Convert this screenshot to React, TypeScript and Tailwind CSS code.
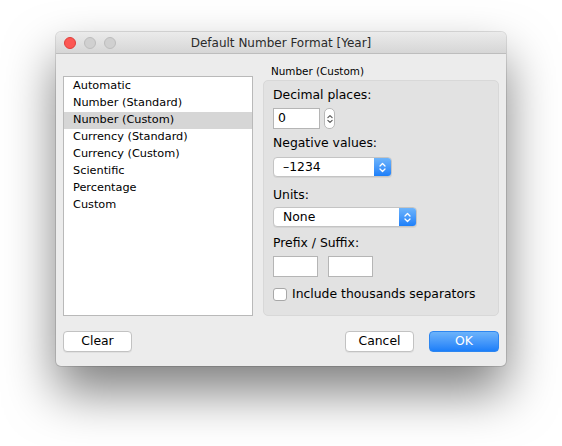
import React from "react";

const font = { fontFamily: '"DejaVu Sans", "Liberation Sans", sans-serif' };

function UpDown({ color = "#fff", w = 7, h = 11 }: { color?: string; w?: number; h?: number }) {
  return (
    <svg width={w} height={h} viewBox="0 0 7 11" fill="none">
      <path d="M1 4 L3.5 1.5 L6 4" stroke={color} strokeWidth="1.3" strokeLinecap="round" strokeLinejoin="round" />
      <path d="M1 7 L3.5 9.5 L6 7" stroke={color} strokeWidth="1.3" strokeLinecap="round" strokeLinejoin="round" />
    </svg>
  );
}

function Select({ value, width }: { value: string; width: string }) {
  return (
    <div
      className={`${width} h-[20px] flex rounded-[4px] bg-white border border-[#c4c4c4] shadow-[0_1px_0_rgba(0,0,0,0.06)] overflow-hidden`}
    >
      <div className="flex-1 flex items-center pl-[9px] text-[12.4px] text-[#000]">{value}</div>
      <div className="w-[17px] h-full flex items-center justify-center bg-gradient-to-b from-[#6db4fb] to-[#1b7ff9]">
        <UpDown />
      </div>
    </div>
  );
}

const items = [
  "Automatic",
  "Number (Standard)",
  "Number (Custom)",
  "Currency (Standard)",
  "Currency (Custom)",
  "Scientific",
  "Percentage",
  "Custom",
];

export default function App() {
  return (
    <div className="w-[562px] h-[446px] bg-white pt-[32px] pl-[56px]" style={font}>
      <div className="w-[450px] h-[334px] rounded-[5px] bg-[#ececec] flex flex-col shadow-[0_26px_50px_0px_rgba(0,0,0,0.5),0_0_0_1px_rgba(0,0,0,0.12)]">
        {/* title bar */}
        <div className="h-[22px] shrink-0 rounded-t-[5px] bg-gradient-to-b from-[#ebebeb] to-[#d6d6d6] border-b border-[#bdbdbd] flex items-center relative">
          <div className="absolute left-[8px] top-[5px] flex gap-[8px]">
            <div className="w-[12px] h-[12px] rounded-full bg-[#fc5753] border border-[#df3e3a]" />
            <div className="w-[12px] h-[12px] rounded-full bg-[#d0d0d0] border border-[#bdbdbd]" />
            <div className="w-[12px] h-[12px] rounded-full bg-[#d0d0d0] border border-[#bdbdbd]" />
          </div>
          <div className="flex-1 text-center text-[12px] text-[#2a2a2a] leading-none">Default Number Format [Year]</div>
        </div>

        {/* body */}
        <div className="flex-1 flex flex-col px-[7px]">
          <div className="flex gap-[10px] pt-[10px]">
            {/* list */}
            <div className="mt-[12px] w-[190px] h-[240px] bg-white border border-[#b9b9b9] pt-[1px]">
              {items.map((it) => (
                <div
                  key={it}
                  className={`h-[17px] flex items-center pl-[9px] text-[11.3px] text-[#000] ${
                    it === "Number (Custom)" ? "bg-[#d6d6d6]" : ""
                  }`}
                >
                  {it}
                </div>
              ))}
            </div>

            {/* right */}
            <div className="w-[236px] flex flex-col">
              <div className="h-[16px] flex items-center pl-[8px] text-[10.4px] text-[#000]">Number (Custom)</div>
              <div className="h-[236px] rounded-[5px] bg-[#e2e2e2] border border-[#d8d8d8] pl-[9px] pt-[6px] flex flex-col text-[12.4px] text-[#000]">
                <div className="h-[16px] flex items-center">Decimal places:</div>
                <div className="mt-[5px] flex items-center gap-[4px]">
                  <div className="w-[47px] h-[21px] bg-white border border-[#b5b5b5] flex items-center pl-[4px]">0</div>
                  <div className="w-[11px] h-[21px] rounded-[5px] bg-white border border-[#b9b9b9] flex items-center justify-center">
                    <UpDown color="#555" w={6} h={10} />
                  </div>
                </div>
                <div className="mt-[6px] h-[16px] flex items-center">Negative values:</div>
                <div className="mt-[6px]">
                  <Select value="–1234" width="w-[119px]" />
                </div>
                <div className="mt-[10px] h-[16px] flex items-center">Units:</div>
                <div className="mt-[4px]">
                  <Select value="None" width="w-[144px]" />
                </div>
                <div className="mt-[8px] h-[16px] flex items-center">Prefix / Suffix:</div>
                <div className="mt-[5px] flex gap-[10px]">
                  <div className="w-[45px] h-[21px] bg-white border border-[#b5b5b5]" />
                  <div className="w-[45px] h-[21px] bg-white border border-[#b5b5b5]" />
                </div>
                <div className="mt-[9px] h-[16px] flex items-center gap-[5px]">
                  <div className="w-[14px] h-[13px] bg-white border border-[#a8a8a8] rounded-[3px]" />
                  <span>Include thousands separators</span>
                </div>
              </div>
            </div>
          </div>

          {/* buttons */}
          <div className="mt-[15px] flex items-center">
            <button className="w-[69px] h-[21px] rounded-[4px] bg-white border border-[#c2c2c2] shadow-[0_1px_0_rgba(0,0,0,0.05)] text-[12.4px] text-[#000]">
              Clear
            </button>
            <div className="flex-1" />
            <button className="w-[69px] h-[21px] rounded-[4px] bg-white border border-[#c2c2c2] shadow-[0_1px_0_rgba(0,0,0,0.05)] text-[12.4px] text-[#000]">
              Cancel
            </button>
            <button className="ml-[15px] w-[70px] h-[21px] rounded-[4px] bg-gradient-to-b from-[#6cb3fa] to-[#1a7ef9] border border-[#2d86f0] text-[12.4px] text-white">
              OK
            </button>
          </div>
        </div>
      </div>
    </div>
  );
}
